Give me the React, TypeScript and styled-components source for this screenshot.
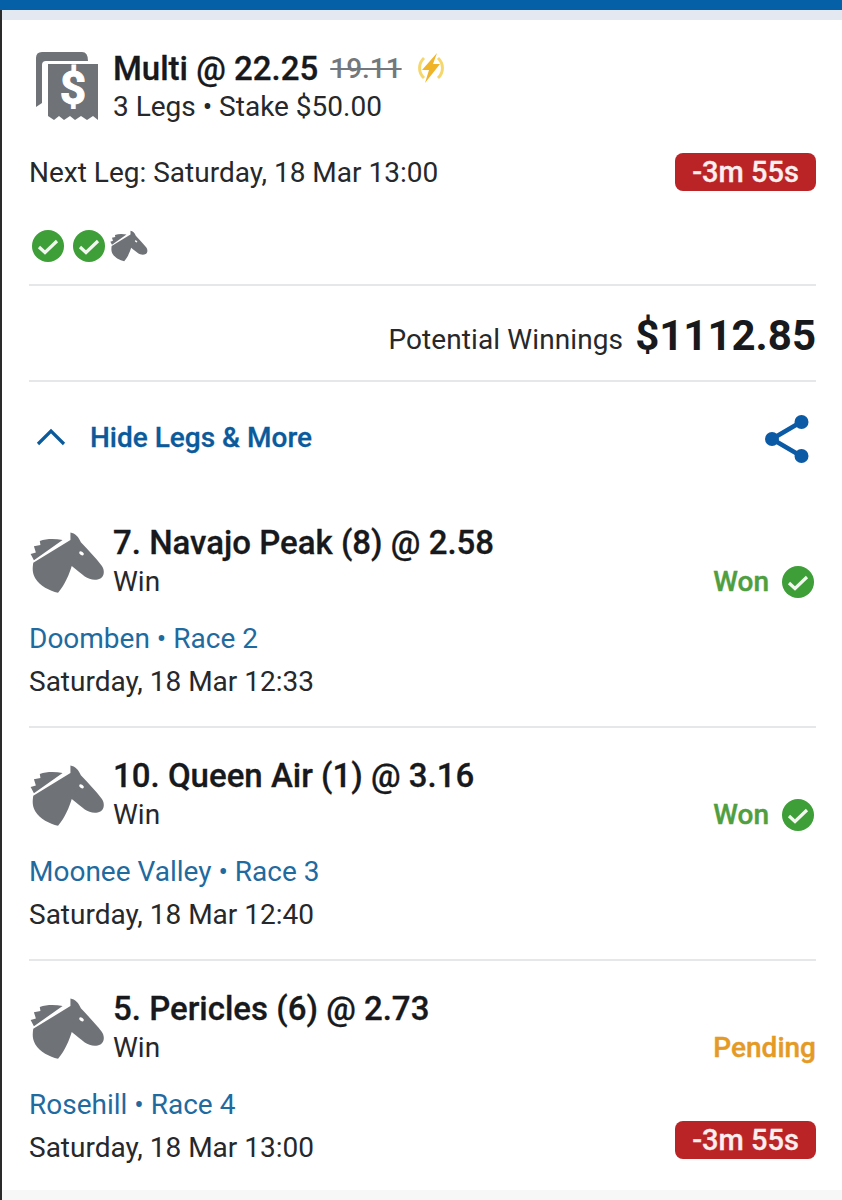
import React from "react";
import styled, { createGlobalStyle } from "styled-components";

type LegStatus = "won" | "pending";

type ILeg = {
  title: string;
  venue: string;
  time: string;
  status: LegStatus;
  countdown?: string;
};

const legs: ILeg[] = [
  { title: "7. Navajo Peak (8) @ 2.58", venue: "Doomben • Race 2", time: "Saturday, 18 Mar 12:33", status: "won" },
  { title: "10. Queen Air (1) @ 3.16", venue: "Moonee Valley • Race 3", time: "Saturday, 18 Mar 12:40", status: "won" },
  { title: "5. Pericles (6) @ 2.73", venue: "Rosehill • Race 4", time: "Saturday, 18 Mar 13:00", status: "pending", countdown: "-3m 55s" },
];

const GlobalStyle = createGlobalStyle`
  html, body {
    margin: 0;
    padding: 0;
    background: #fff;
  }
  body {
    font-family: Roboto, "Liberation Sans", sans-serif;
    color: #26282b;
  }
`;

const Page = styled.div`
  width: 842px;
  height: 1200px;
  overflow: hidden;
  display: flex;
  flex-direction: column;
  background: #fff;
`;

const TopBar = styled.div`
  flex: none;
  height: 10px;
  background: #0560a8;
`;

const Frame = styled.div`
  flex: 1;
  min-height: 0;
  display: flex;
  flex-direction: column;
  border-left: 2px solid #2a2a2a;
`;

const TopShade = styled.div`
  flex: none;
  height: 10px;
  background: #e4e9f1;
`;

const BottomShade = styled.div`
  flex: none;
  height: 10px;
  background: #f7f7f7;
`;

const Card = styled.div`
  flex: 1;
  min-height: 0;
  padding: 30px 26px 0 27px;
  display: flex;
  flex-direction: column;
`;

const Header = styled.div`
  display: flex;
  gap: 12px;
  height: 72px;
`;

const Titles = styled.div`
  display: flex;
  flex-direction: column;
`;

const TitleRow = styled.div`
  display: flex;
  align-items: center;
  height: 36px;
`;

const Title = styled.span`
  font-size: 33px;
  font-weight: 500;
  color: #17191c;
  -webkit-text-stroke: 0.3px #17191c;
`;

const OldPrice = styled.span`
  font-size: 28px;
  font-weight: 500;
  color: #74777b;
  text-decoration: line-through;
  margin: 0 14px 0 12px;
`;

const Sub = styled.div`
  font-size: 28px;
  line-height: 36px;
  margin-top: 3px;
`;

const NextRow = styled.div`
  display: flex;
  align-items: center;
  justify-content: space-between;
  margin-top: 31px;
  height: 38px;
`;

const BodyText = styled.span`
  font-size: 28px;
`;

const Countdown = styled.span<{ $raised?: boolean }>`
  display: inline-flex;
  align-items: center;
  justify-content: center;
  width: 141px;
  height: 38px;
  border-radius: 8px;
  background: #bb2426;
  color: #fbeeee;
  font-size: 29px;
  font-weight: 500;
  -webkit-text-stroke: 0.3px #fbeeee;
  margin-top: ${(p) => (p.$raised ? "-14px" : "0")};
`;

const Progress = styled.div`
  display: flex;
  align-items: center;
  gap: 9px;
  margin: 39px 0 22px 3px;
  height: 32px;
`;

const ProgressHorse = styled.div`
  display: flex;
  margin-left: -4px;
`;

const Rule = styled.div`
  flex: none;
  height: 2px;
  background: #e6e7e9;
`;

const Winnings = styled.div`
  display: flex;
  align-items: center;
  justify-content: flex-end;
  gap: 12px;
  height: 89px;
  padding-top: 5px;
`;

const WinLabel = styled.span`
  font-size: 28px;
  letter-spacing: 0.1px;
  margin-top: 8px;
`;

const WinAmount = styled.span`
  font-size: 42px;
  font-weight: 700;
  color: #17191c;
`;

const Toggle = styled.div`
  display: flex;
  align-items: center;
  justify-content: space-between;
  height: 110px;
  margin-bottom: 3px;
  padding-right: 7px;
  color: #0b5a9c;
`;

const ToggleLabel = styled.div`
  display: flex;
  align-items: center;
  gap: 24px;
  padding-left: 7px;
  font-size: 28px;
  font-weight: 500;
  -webkit-text-stroke: 0.3px #0b5a9c;
`;

const Leg = styled.div<{ $last?: boolean }>`
  flex: none;
  display: flex;
  flex-direction: column;
  height: ${(p) => (p.$last ? 226 : 231)}px;
`;

const LegHead = styled.div`
  display: flex;
  align-items: flex-start;
  gap: 8px;
  margin-top: 28px;
`;

const HorseSlot = styled.div`
  margin: 8px 0 0 1px;
`;

const LegTitles = styled.div`
  flex: 1;
  display: flex;
  flex-direction: column;
`;

const LegTitle = styled.div`
  font-size: 33px;
  line-height: 40px;
  font-weight: 500;
  color: #17191c;
  -webkit-text-stroke: 0.3px #17191c;
`;

const LegType = styled.div`
  display: flex;
  align-items: center;
  justify-content: space-between;
  font-size: 28px;
  line-height: 36px;
  margin-top: 1px;
`;

const Venue = styled.div`
  font-size: 28px;
  line-height: 36px;
  color: #1f6a9f;
  margin-top: 21px;
`;

const TimeRow = styled.div`
  display: flex;
  align-items: center;
  justify-content: space-between;
  font-size: 28px;
  height: 38px;
  margin-top: 5px;
`;

const Status = styled.span<{ $status: LegStatus }>`
  display: inline-flex;
  align-items: center;
  gap: 13px;
  padding-right: ${(p) => (p.$status === "won" ? "2px" : "0")};
  font-size: 28px;
  font-weight: 500;
  color: ${(p) => (p.$status === "won" ? "#4f9e3f" : "#e59a26")};
  -webkit-text-stroke: 0.4px ${(p) => (p.$status === "won" ? "#4f9e3f" : "#e59a26")};
`;

const HorseIcon = ({ size }: { size: number }) => (
  <svg width={size} height={size * 0.84} viewBox="88 58 230 192" aria-hidden="true">
    <path
      fill="#6f7277"
      d="M212 62 C226 64 238 76 244 92 C266 116 290 140 308 164 C318 178 316 196 304 203 C290 210 270 207 256 197 C244 188 230 176 216 165 C208 190 196 222 174 247 C148 240 118 226 104 202 C94 184 96 170 98 155 L212 85 Z"
    />
    <path
      fill="#6f7277"
      d="M90 128 L106 123 L100 104 L120 100 L118 88 C140 80 166 81 188 85 L100 147 Z"
    />
    <ellipse cx="246" cy="126" rx="8" ry="5" fill="#fff" transform="rotate(35 246 126)" />
  </svg>
);

const CheckIcon = ({ size }: { size: number }) => (
  <svg width={size} height={size} viewBox="0 0 32 32" aria-hidden="true">
    <circle cx="16" cy="16" r="16" fill="#3e9e38" />
    <path d="M7 17 L13 22.5 L25 11" fill="none" stroke="#f2f8ef" strokeWidth="3.2" />
  </svg>
);

const ReceiptIcon = () => (
  <svg width="72" height="72" viewBox="-1 0 72 72" aria-hidden="true">
    <path fill="#6f7277" d="M6 57 V8 Q6 2 12 2 H52 Q58 2 58 11 H16 Q12 11 12 15 V53 Z" />
    <path
      fill="#6f7277"
      d="M18 14 H68 V70 L63 66 L57 70 L51 66 L45 70 L40 66 L34 70 L29 66 L24 70 L18 66 Z"
    />
    <text
      x="43"
      y="54"
      textAnchor="middle"
      fontFamily="Roboto, sans-serif"
      fontWeight="700"
      fontSize="46"
      fill="#fff"
      stroke="#fff"
      strokeWidth="1"
    >
      $
    </text>
  </svg>
);

const BoltIcon = () => (
  <svg width="30" height="32" viewBox="0 0 30 32" aria-hidden="true">
    <path d="M8 6 A13.5 13.5 0 0 0 8 26" fill="none" stroke="#f5d76e" strokeWidth="3" />
    <path d="M22 6 A13.5 13.5 0 0 1 22 26" fill="none" stroke="#f5d76e" strokeWidth="3" />
    <path d="M21 1 L6 18 H13 L9 31 L24 12 H17 Z" fill="#f0b429" />
  </svg>
);

const ShareIcon = () => (
  <svg width="44" height="50" viewBox="0 -2 44 50" overflow="visible" aria-hidden="true">
    <path d="M7 25 L36 8 M7 25 L36 42" stroke="#0b5aa6" strokeWidth="4.5" fill="none" />
    <circle cx="7" cy="25" r="7" fill="#0b5aa6" />
    <circle cx="36.5" cy="8" r="7" fill="#0b5aa6" />
    <circle cx="36.5" cy="42" r="7" fill="#0b5aa6" />
  </svg>
);

const ChevronIcon = () => (
  <svg width="30" height="18" viewBox="0 0 30 18" aria-hidden="true">
    <path d="M2 16 L15 3 L28 16" fill="none" stroke="#0b5a9c" strokeWidth="3.2" />
  </svg>
);

const App = () => {
  return (
    <Page>
      <GlobalStyle />
      <TopBar />
      <Frame>
        <TopShade />
        <Card>
          <Header>
            <ReceiptIcon />
            <Titles>
              <TitleRow>
                <Title>Multi @ 22.25</Title>
                <OldPrice>19.11</OldPrice>
                <BoltIcon />
              </TitleRow>
              <Sub>3 Legs • Stake $50.00</Sub>
            </Titles>
          </Header>

          <NextRow>
            <BodyText>Next Leg: Saturday, 18 Mar 13:00</BodyText>
            <Countdown>-3m 55s</Countdown>
          </NextRow>

          <Progress>
            <CheckIcon size={32} />
            <CheckIcon size={32} />
            <ProgressHorse>
              <HorseIcon size={38} />
            </ProgressHorse>
          </Progress>

          <Rule />
          <Winnings>
            <WinLabel>Potential Winnings</WinLabel>
            <WinAmount>$1112.85</WinAmount>
          </Winnings>
          <Rule />

          <Toggle>
            <ToggleLabel>
              <ChevronIcon />
              Hide Legs &amp; More
            </ToggleLabel>
            <ShareIcon />
          </Toggle>

          {legs.map((leg, index) => {
            const last = index === legs.length - 1;
            return (
              <React.Fragment key={leg.title}>
                <Leg $last={last}>
                  <LegHead>
                    <HorseSlot>
                      <HorseIcon size={75} />
                    </HorseSlot>
                    <LegTitles>
                      <LegTitle>{leg.title}</LegTitle>
                      <LegType>
                        Win
                        <Status $status={leg.status}>
                          {leg.status === "won" ? "Won" : "Pending"}
                          {leg.status === "won" && <CheckIcon size={32} />}
                        </Status>
                      </LegType>
                    </LegTitles>
                  </LegHead>
                  <Venue>{leg.venue}</Venue>
                  <TimeRow>
                    {leg.time}
                    {leg.countdown && <Countdown $raised>{leg.countdown}</Countdown>}
                  </TimeRow>
                </Leg>
                {!last && <Rule />}
              </React.Fragment>
            );
          })}
        </Card>
        <BottomShade />
      </Frame>
    </Page>
  );
};

export default App;
